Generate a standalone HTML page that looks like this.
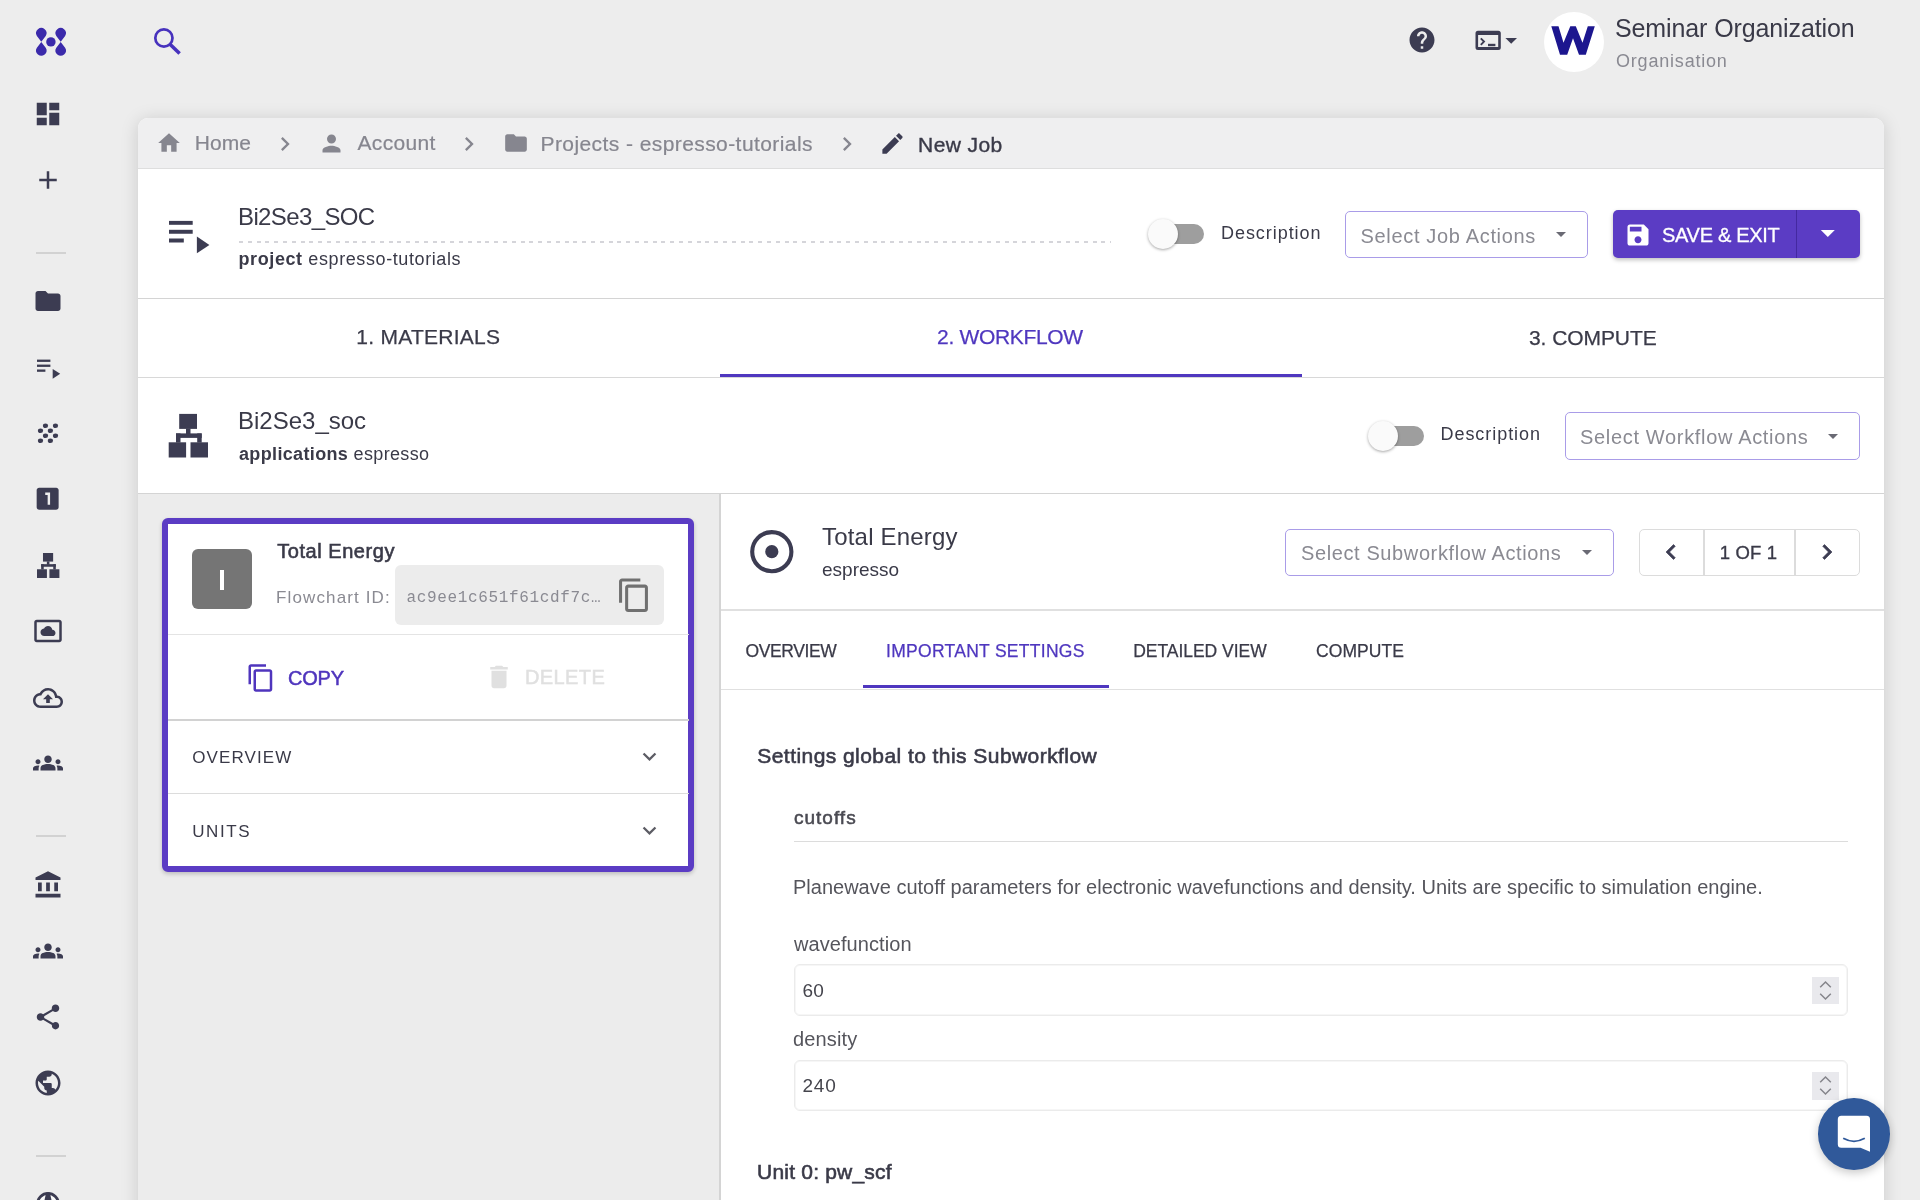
<!DOCTYPE html>
<html><head><meta charset="utf-8">
<style>
*{box-sizing:border-box;margin:0;padding:0}
html,body{width:1920px;height:1200px;overflow:hidden;background:#ededed;font-family:"Liberation Sans",sans-serif;color:#3a3a48}
.a{position:absolute}
.ic{position:absolute;fill:#3c3c52}
.t{position:absolute;white-space:nowrap;line-height:1}
.line{position:absolute;background:#e0e0e0}
</style></head><body>
<div id="root" class="a" style="left:0;top:0;width:1920px;height:1200px;will-change:transform">

<!-- ===== SIDEBAR ===== -->
<svg class="a" style="left:0;top:0;fill:#3b2aab" width="80" height="70" viewBox="0 0 80 70"><path d="M41.3 41.7 L36.90 35.90 A5.2 5.2 0 1 1 45.70 35.90 Z"/><path d="M60.7 41.7 L56.30 35.90 A5.2 5.2 0 1 1 65.10 35.90 Z"/><path d="M41.3 41.9 L36.90 47.70 A5.2 5.2 0 1 0 45.70 47.70 Z"/><path d="M60.7 41.9 L56.30 47.70 A5.2 5.2 0 1 0 65.10 47.70 Z"/><circle cx="50.9" cy="41.9" r="4.7"/></svg>
<!-- dashboard -->
<svg class="ic" style="left:33px;top:99px" width="30" height="30" viewBox="0 0 24 24"><path d="M3 13h8V3H3v10zm0 8h8v-6H3v6zm10 0h8V11h-8v10zm0-18v6h8V3h-8z"/></svg>
<!-- add -->
<svg class="ic" style="left:33px;top:165px" width="30" height="30" viewBox="0 0 24 24"><path d="M19 13h-6v6h-2v-6H5v-2h6V5h2v6h6v2z"/></svg>
<div class="a" style="left:36px;top:252px;width:30px;height:1.5px;background:#d2d2d2"></div>
<!-- folder -->
<svg class="ic" style="left:33px;top:286px" width="30" height="30" viewBox="0 0 24 24"><path d="M10 4H4c-1.1 0-1.99.9-1.99 2L2 18c0 1.1.9 2 2 2h16c1.1 0 2-.9 2-2V8c0-1.1-.9-2-2-2h-8l-2-2z"/></svg>
<!-- playlist play -->
<svg class="ic" style="left:0;top:0" width="80" height="400" viewBox="0 0 80 400">
 <rect x="37" y="359.6" width="13.4" height="2.3"/><rect x="37" y="364.6" width="13.4" height="2.3"/><rect x="37" y="369.5" width="8.4" height="2.3"/>
 <path d="M52.7 369L60.2 373.85L52.7 378.7z"/>
</svg>
<!-- grain -->
<svg class="ic" style="left:0;top:400px" width="80" height="60" viewBox="0 400 80 60">
 <ellipse cx="45.5" cy="425.8" rx="2.6" ry="2.3"/><ellipse cx="55.5" cy="425.8" rx="2.6" ry="2.3"/>
 <ellipse cx="40.5" cy="430.7" rx="2.6" ry="2.3"/><ellipse cx="50.4" cy="430.7" rx="2.6" ry="2.3"/>
 <ellipse cx="45.5" cy="435.7" rx="2.6" ry="2.3"/><ellipse cx="55.5" cy="435.7" rx="2.6" ry="2.3"/>
 <ellipse cx="40.5" cy="440.75" rx="2.6" ry="2.3"/><ellipse cx="50.4" cy="440.75" rx="2.6" ry="2.3"/>
</svg>
<!-- looks one -->
<svg class="ic" style="left:33.3px;top:484px" width="29.3" height="29.3" viewBox="0 0 24 24"><path d="M19 3H5c-1.1 0-2 .9-2 2v14c0 1.1.9 2 2 2h14c1.1 0 2-.9 2-2V5c0-1.1-.9-2-2-2zm-5 14h-2V9h-2V7h4v10z"/></svg>
<!-- sitemap -->
<svg class="ic" style="left:0;top:540px" width="80" height="50" viewBox="0 540 80 50">
 <g transform="translate(37 553) scale(0.57 0.573) translate(-168.7 -413.9)">
 <rect x="179.2" y="413.9" width="17.8" height="15"/><rect x="168.7" y="442.3" width="17.4" height="15.2"/><rect x="190.5" y="442.3" width="17.5" height="15.2"/>
 <rect x="186" y="428.5" width="4.5" height="6"/><rect x="176" y="433.4" width="25.7" height="4.5"/><rect x="176" y="433.4" width="4.5" height="9.2"/><rect x="197.2" y="433.4" width="4.5" height="9.2"/>
 </g>
</svg>
<!-- daydream -->
<svg class="ic" style="left:33px;top:616px" width="30" height="30" viewBox="0 0 24 24"><path d="M9 16h6.5c1.38 0 2.5-1.12 2.5-2.5S16.88 11 15.5 11h-.05c-.24-1.69-1.69-3-3.45-3-1.4 0-2.6.83-3.16 2.02h-.16C7.170 10.18 6 11.45 6 13c0 1.66 1.34 3 3 3zM21 3H3c-1.1 0-2 .9-2 2v14c0 1.1.9 2 2 2h18c1.1 0 2-.9 2-2V5c0-1.1-.9-2-2-2zm0 16.01H3V4.99h18v14.02z"/></svg>
<!-- cloud upload -->
<svg class="ic" style="left:33px;top:683px" width="30" height="30" viewBox="0 0 24 24"><path d="M19.35 10.04C18.67 6.59 15.64 4 12 4 9.11 4 6.6 5.64 5.35 8.04 2.34 8.36 0 10.91 0 14c0 3.31 2.69 6 6 6h13c2.76 0 5-2.240 5-5 0-2.64-2.05-4.78-4.65-4.96zM19 18H6c-2.21 0-4-1.79-4-4 0-2.05 1.53-3.76 3.56-3.97l1.07-.11.5-.95C8.08 7.14 9.94 6 12 6c2.62 0 4.88 1.86 5.39 4.43l.3 1.5 1.53.11c1.56.1 2.78 1.41 2.78 2.96 0 1.65-1.35 3-3 3zM8 13h2.55v3h2.9v-3H16l-4-4z"/></svg>
<!-- groups -->
<svg class="ic" style="left:33px;top:748px" width="30" height="30" viewBox="0 0 24 24"><path d="M12 12.75c1.63 0 3.07.39 4.24.9 1.080.48 1.76 1.56 1.76 2.73V18H6v-1.61c0-1.18.68-2.26 1.76-2.73 1.17-.52 2.61-.91 4.24-.91zM4 13c1.1 0 2-.9 2-2s-.9-2-2-2-2 .9-2 2 .9 2 2 2zm1.13 1.1c-.37-.06-.74-.1-1.13-.1-.99 0-1.93.21-2.78.58C.48 14.9 0 15.62 0 16.43V18h4.5v-1.61c0-.83.23-1.61.63-2.29zM20 13c1.1 0 2-.9 2-2s-.9-2-2-2-2 .9-2 2 .9 2 2 2zm4 3.43c0-.81-.48-1.53-1.22-1.85-.85-.37-1.79-.58-2.78-.58-.39 0-.76.04-1.13.1.4.68.63 1.46.63 2.29V18H24v-1.57zM12 6c1.66 0 3 1.34 3 3s-1.34 3-3 3-3-1.34-3-3 1.34-3 3-3z"/></svg>
<div class="a" style="left:36px;top:835px;width:30px;height:1.5px;background:#d2d2d2"></div>
<!-- bank -->
<svg class="ic" style="left:33px;top:870px" width="30" height="30" viewBox="0 0 24 24"><path d="M4 10h3v7H4zM10.5 10h3v7h-3zM2 19h20v3H2zM17 10h3v7h-3zM12 1L2 6v2h20V6z"/></svg>
<!-- groups 2 -->
<svg class="ic" style="left:33px;top:936px" width="30" height="30" viewBox="0 0 24 24"><path d="M12 12.75c1.63 0 3.07.39 4.24.9 1.080.48 1.76 1.56 1.76 2.73V18H6v-1.61c0-1.18.68-2.26 1.76-2.73 1.17-.52 2.61-.91 4.24-.91zM4 13c1.1 0 2-.9 2-2s-.9-2-2-2-2 .9-2 2 .9 2 2 2zm1.13 1.1c-.37-.06-.74-.1-1.13-.1-.99 0-1.93.21-2.78.58C.48 14.9 0 15.62 0 16.43V18h4.5v-1.61c0-.83.23-1.61.63-2.29zM20 13c1.1 0 2-.9 2-2s-.9-2-2-2-2 .9-2 2 .9 2 2 2zm4 3.43c0-.81-.48-1.53-1.22-1.850-.85-.37-1.79-.58-2.78-.58-.39 0-.76.04-1.13.1.4.68.63 1.46.63 2.29V18H24v-1.57zM12 6c1.66 0 3 1.34 3 3s-1.34 3-3 3-3-1.34-3-3 1.34-3 3-3z"/></svg>
<!-- share -->
<svg class="ic" style="left:33px;top:1002px" width="30" height="30" viewBox="0 0 24 24"><path d="M18 16.08c-.76 0-1.44.3-1.96.77L8.91 12.7c.05-.23.09-.46.09-.7s-.04-.47-.09-.7l7.05-4.11c.54.5 1.25.81 2.04.81 1.66 0 3-1.34 3-3s-1.34-3-3-3-3 1.34-3 3c0 .24.04.47.09.7L8.04 9.81C7.5 9.31 6.79 9 6 9c-1.66 0-3 1.34-3 3s1.34 3 3 3c.79 0 1.5-.31 2.04-.81l7.12 4.16c-.05.21-.08.43-.08.65 0 1.61 1.31 2.92 2.92 2.92 1.61 0 2.92-1.31 2.92-2.92s-1.310-2.92-2.92-2.92z"/></svg>
<!-- globe -->
<svg class="ic" style="left:33px;top:1068px" width="30" height="30" viewBox="0 0 24 24"><path d="M12 2C6.48 2 2 6.48 2 12s4.48 10 10 10 10-4.48 10-10S17.52 2 12 2zm-1 17.93c-3.95-.49-7-3.85-7-7.93 0-.62.08-1.21.21-1.79L9 15v1c0 1.1.9 2 2 2v1.93zm6.9-2.54c-.26-.81-1-1.39-1.9-1.39h-1v-3c0-.55-.45-1-1-1H8v-2h2c.55 0 1-.45 1-1V7h2c1.1 0 2-.9 2-2v-.41c2.93 1.19 5 4.06 5 7.41 0 2.08-.8 3.97-2.1 5.39z"/></svg>
<div class="a" style="left:36px;top:1155px;width:30px;height:1.5px;background:#d2d2d2"></div>
<svg class="a" style="left:20px;top:1180px" width="60" height="20" viewBox="20 1180 60 20"><circle cx="48" cy="1203.8" r="10.4" fill="#fafafa" stroke="#3c3c52" stroke-width="2.8"/><path d="M46.2 1192.5h3.6l1.8 8h-7.2z" fill="#3c3c52"/></svg>

<!-- ===== TOP BAR ===== -->
<svg class="a" style="left:150px;top:26px" width="34" height="32" viewBox="0 0 34 32">
 <circle cx="13.9" cy="12" r="8.6" fill="none" stroke="#4732bd" stroke-width="2.7"/>
 <line x1="20" y1="18.3" x2="29.6" y2="27.5" stroke="#4732bd" stroke-width="3.6"/>
</svg>
<svg class="ic" style="left:1406.8px;top:25.4px" width="30" height="30" viewBox="0 0 24 24"><path d="M12 2C6.48 2 2 6.48 2 12s4.48 10 10 10 10-4.48 10-10S17.52 2 12 2zm1 17h-2v-2h2v2zm2.07-7.75l-.9.92C13.45 12.9 13 13.5 13 15h-2v-.5c0-1.1.45-2.1 1.17-2.83l1.24-1.26c.37-.36.59-.86.59-1.41 0-1.1-.9-2-2-2s-2 .9-2 2H8c0-2.21 1.79-4 4-4s4 1.79 4 4c0 .88-.36 1.68-.93 2.25z"/></svg>
<svg class="a" style="left:1460px;top:20px;fill:#3c3c52" width="70" height="40" viewBox="1460 20 70 40">
 <path fill-rule="evenodd" d="M1478 30.8h20.3a2.5 2.5 0 0 1 2.5 2.5v14.2a2.5 2.5 0 0 1-2.5 2.5h-20.3a2.5 2.5 0 0 1-2.5-2.5v-14.2a2.5 2.5 0 0 1 2.5-2.5zM1478.1 35.1v11.9h20.1v-11.9z"/>
 <path d="M1480.8 38.3l3.2 3.3-3.2 3.3" fill="none" stroke="#3c3c52" stroke-width="1.9"/>
 <rect x="1488" y="43.8" width="7.4" height="2.4"/>
 <path d="M1505.4 37.9h11.6l-5.8 5.9z"/>
</svg>
<div class="a" style="left:1544px;top:12px;width:60px;height:60px;border-radius:50%;background:#fff"></div>
<svg class="a" style="left:1540px;top:15px" width="65" height="50" viewBox="1540 15 65 50"><path d="M1551.3 26.2L1558.5 26.2L1563.5 42.7L1570.3 26.2L1575.8 26.2L1582.5 42.7L1587.8 26.2L1594.8 26.2L1585.8 54.7L1579 54.7L1573 38.2L1567.2 54.7L1560 54.7Z" fill="#1c168f"/></svg>
<div class="t" style="left:1615.0px;top:16.0px;font-size:25px;color:#3a3a48;letter-spacing:-0.11px">Seminar Organization</div>
<div class="t" style="left:1616.0px;top:52.0px;font-size:18px;color:#8a8a92;letter-spacing:0.80px">Organisation</div>

<!-- ===== CARD ===== -->
<div class="a" style="left:138px;top:118px;width:1746px;height:1100px;background:#fff;border-radius:10px 10px 0 0;box-shadow:0 2px 18px rgba(0,0,0,0.15)"></div>
<div class="a" style="left:138px;top:118px;width:1746px;height:51px;background:#efeff0;border-radius:10px 10px 0 0;border-bottom:1.5px solid #dedede"></div>

<!-- breadcrumb -->
<svg class="a" style="left:156px;top:130px;fill:#86868f" width="26" height="26" viewBox="0 0 24 24"><path d="M10 20v-6h4v6h5v-8h3L12 3 2 12h3v8z"/></svg>
<div class="t" style="left:194.8px;top:132.2px;font-size:21px;color:#86868f;letter-spacing:0.00px;-webkit-text-stroke:0.2px #86868f">Home</div>
<svg class="a" style="left:270.6px;top:129.5px;fill:#86868f" width="28" height="28" viewBox="0 0 24 24"><path d="M10 6L8.59 7.41 13.17 12l-4.58 4.59L10 18l6-6z"/></svg>
<svg class="a" style="left:318px;top:129.5px;fill:#86868f" width="27" height="27" viewBox="0 0 24 24"><path d="M12 12c2.21 0 4-1.79 4-4s-1.79-4-4-4-4 1.79-4 4 1.79 4 4 4zm0 2c-2.67 0-8 1.34-8 4v2h16v-2c0-2.66-5.33-4-8-4z"/></svg>
<div class="t" style="left:357.5px;top:132.2px;font-size:21px;color:#86868f;letter-spacing:0.33px;-webkit-text-stroke:0.2px #86868f">Account</div>
<svg class="a" style="left:455.2px;top:129.5px;fill:#86868f" width="28" height="28" viewBox="0 0 24 24"><path d="M10 6L8.59 7.41 13.17 12l-4.58 4.59L10 18l6-6z"/></svg>
<svg class="a" style="left:503px;top:130px;fill:#86868f" width="26" height="26" viewBox="0 0 24 24"><path d="M10 4H4c-1.1 0-1.99.9-1.99 2L2 18c0 1.1.9 2 2 2h16c1.1 0 2-.9 2-2V8c0-1.1-.9-2-2-2h-8l-2-2z"/></svg>
<div class="t" style="left:540.5px;top:133.2px;font-size:21px;color:#86868f;letter-spacing:0.42px;-webkit-text-stroke:0.2px #86868f">Projects - espresso-tutorials</div>
<svg class="a" style="left:832.5px;top:129.5px;fill:#86868f" width="28" height="28" viewBox="0 0 24 24"><path d="M10 6L8.59 7.41 13.17 12l-4.58 4.59L10 18l6-6z"/></svg>
<svg class="a" style="left:879px;top:130px;fill:#3c3c52" width="27" height="27" viewBox="0 0 24 24"><path d="M3 17.25V21h3.75L17.81 9.94l-3.75-3.75L3 17.25zM20.71 7.04c.39-.39.39-1.020 0-1.41l-2.34-2.34c-.39-.39-1.02-.39-1.41 0l-1.83 1.83 3.75 3.75 1.83-1.83z"/></svg>
<div class="t" style="left:918.1px;top:134.0px;font-size:21px;color:#3a3a48;letter-spacing:0.40px;-webkit-text-stroke:0.4px #3a3a48">New Job</div>

<!-- job header -->
<svg class="a" style="left:0;top:0;fill:#3c3c52" width="220" height="260" viewBox="0 0 220 260">
 <rect x="169" y="220.9" width="23.7" height="3.9"/><rect x="169" y="229.8" width="23.7" height="3.95"/><rect x="169" y="238.5" width="14.8" height="4"/>
 <path d="M196.9 236.5L209.4 244.9L196.9 253.3z"/>
</svg>
<div class="t" style="left:238.0px;top:205.0px;font-size:24px;color:#3a3a48;letter-spacing:-0.62px">Bi2Se3_SOC</div>
<div class="a" style="left:239px;top:241.3px;width:872px;height:1.3px;background:repeating-linear-gradient(90deg,#d5d5da 0 4px,transparent 4px 8.8px)"></div>
<div class="t" style="left:238.5px;top:250.0px;font-size:18px;color:#3a3a48;letter-spacing:0.60px"><b>project</b> espresso-tutorials</div>

<div class="a" style="left:1153px;top:223.5px;width:51px;height:20px;border-radius:10px;background:#9e9e9e"></div>
<div class="a" style="left:1147.5px;top:219px;width:30px;height:30px;border-radius:50%;background:#fafafa;box-shadow:0 1px 3px rgba(0,0,0,0.35)"></div>
<div class="t" style="left:1221.0px;top:224.0px;font-size:18px;color:#3a3a48;letter-spacing:0.95px">Description</div>

<div class="a" style="left:1345px;top:210.5px;width:243px;height:47px;border:1.5px solid #a99ce8;border-radius:5px"></div>
<div class="t" style="left:1360.5px;top:226.0px;font-size:20px;color:#8a8a92;letter-spacing:0.67px">Select Job Actions</div>
<svg class="a" style="left:1549px;top:222px;fill:#6a6a74" width="24" height="24" viewBox="0 0 24 24"><path d="M7 10l5 5 5-5z"/></svg>

<div class="a" style="left:1612.5px;top:210px;width:247px;height:47.5px;background:#5b3cc4;border-radius:5px;box-shadow:0 2px 4px rgba(0,0,0,0.25)"></div>
<div class="a" style="left:1796px;top:210px;width:1.2px;height:47.5px;background:#4429a0"></div>
<svg class="a" style="left:1623.5px;top:220.5px;fill:#fff" width="28" height="28" viewBox="0 0 24 24"><path d="M17 3H5c-1.11 0-2 .9-2 2v14c0 1.1.89 2 2 2h14c1.1 0 2-.9 2-2V7l-4-4zm-5 16c-1.66 0-3-1.34-3-3s1.34-3 3-3 3 1.34 3 3-1.34 3-3 3zm3-10H5V5h10v4z"/></svg>
<div class="t" style="left:1662.0px;top:225.0px;font-size:20px;color:#fff;letter-spacing:-0.30px;-webkit-text-stroke:0.3px #fff">SAVE &amp; EXIT</div>
<svg class="a" style="left:1811.2px;top:216px;fill:#fff" width="33.6" height="33.6" viewBox="0 0 24 24"><path d="M7 10l5 5 5-5z"/></svg>

<div class="line" style="left:138px;top:297.8px;width:1746px;height:1.4px;background:#d4d4d4"></div>

<!-- steps tabs -->
<div class="t" style="left:356.2px;top:326.0px;font-size:21px;color:#3a3a48;letter-spacing:0.28px;-webkit-text-stroke:0.25px #3a3a48">1. MATERIALS</div>
<div class="t" style="left:937.1px;top:326.0px;font-size:21px;color:#4f37bf;letter-spacing:-0.34px;-webkit-text-stroke:0.25px #4f37bf">2. WORKFLOW</div>
<div class="t" style="left:1529.0px;top:326.8px;font-size:21px;color:#3a3a48;letter-spacing:-0.07px;-webkit-text-stroke:0.25px #3a3a48">3. COMPUTE</div>
<div class="line" style="left:138px;top:377px;width:1746px;height:1.4px;background:#d8d8d8"></div>
<div class="a" style="left:720px;top:373.5px;width:582px;height:3.5px;background:#4f37bf"></div>

<!-- workflow header -->
<svg class="a" style="left:0;top:380px;fill:#3c3c52" width="220" height="100" viewBox="0 380 220 100">
 <rect x="179.2" y="413.9" width="17.8" height="15"/><rect x="168.7" y="442.3" width="17.4" height="15.2"/><rect x="190.5" y="442.3" width="17.5" height="15.2"/>
 <rect x="186" y="428.5" width="4.5" height="6"/><rect x="176" y="433.4" width="25.7" height="4.5"/><rect x="176" y="433.4" width="4.5" height="9.2"/><rect x="197.2" y="433.4" width="4.5" height="9.2"/>
</svg>
<div class="t" style="left:238.0px;top:409.0px;font-size:24px;color:#3a3a48;letter-spacing:-0.00px">Bi2Se3_soc</div>
<div class="t" style="left:239.0px;top:444.5px;font-size:18px;color:#3a3a48;letter-spacing:0.35px"><b>applications</b> espresso</div>

<div class="a" style="left:1373px;top:425.5px;width:51px;height:20px;border-radius:10px;background:#9e9e9e"></div>
<div class="a" style="left:1368px;top:421px;width:30px;height:30px;border-radius:50%;background:#fafafa;box-shadow:0 1px 3px rgba(0,0,0,0.35)"></div>
<div class="t" style="left:1440.5px;top:424.5px;font-size:18px;color:#3a3a48;letter-spacing:0.95px">Description</div>
<div class="a" style="left:1565px;top:412px;width:295px;height:47.5px;border:1.5px solid #a99ce8;border-radius:5px"></div>
<div class="t" style="left:1580.0px;top:427.0px;font-size:20px;color:#8a8a92;letter-spacing:0.67px">Select Workflow Actions</div>
<svg class="a" style="left:1821px;top:424px;fill:#6a6a74" width="24" height="24" viewBox="0 0 24 24"><path d="M7 10l5 5 5-5z"/></svg>
<div class="line" style="left:138px;top:492.8px;width:1746px;height:1.4px;background:#d4d4d4"></div>

<!-- left panel -->
<div class="a" style="left:138px;top:494.2px;width:583px;height:720px;background:#ececec;border-right:2px solid #d4d4d4"></div>

<!-- unit card -->
<div class="a" style="left:162px;top:518px;width:532px;height:354px;background:#fff;border:6px solid #5b3cc4;border-radius:6px;box-shadow:0 2px 4px rgba(0,0,0,0.2)"></div>
<div class="a" style="left:192px;top:549px;width:60px;height:60px;border-radius:6px;background:#757575"></div><div class="a" style="left:220.1px;top:570px;width:3.6px;height:19.7px;background:#fff"></div>
<div class="t" style="left:277.2px;top:541.0px;font-size:20px;color:#3a3a48;-webkit-text-stroke:0.6px #3a3a48;letter-spacing:0.55px">Total Energy</div>
<div class="t" style="left:276.0px;top:588.5px;font-size:17px;color:#8a8a92;letter-spacing:1.13px">Flowchart ID:</div>
<div class="a" style="left:395px;top:565px;width:269px;height:60px;background:#ececec;border-radius:6px"></div>
<div class="t" style="left:406.6px;top:590.0px;font-size:16px;color:#8a8a92;letter-spacing:0.64px;font-family:'Liberation Mono',monospace">ac9ee1c651f61cdf7c…</div>
<svg class="a" style="left:616px;top:576.8px;fill:#707070" width="36.5" height="36.5" viewBox="0 0 24 24"><path d="M16 1H4c-1.1 0-2 .9-2 2v14h2V3h12V1zm3 4H8c-1.1 0-2 .9-2 2v14c0 1.1.9 2 2 2h11c1.1 0 2-.9 2-2V7c0-1.1-.9-2-2-2zm0 16H8V7h11v14z"/></svg>
<div class="line" style="left:167.5px;top:633.5px;width:521px;height:1.5px;background:#e4e4e4"></div>
<svg class="a" style="left:246.3px;top:662.5px;fill:#4f35bd" width="30" height="30" viewBox="0 0 24 24"><path d="M16 1H4c-1.1 0-2 .9-2 2v14h2V3h12V1zm3 4H8c-1.1 0-2 .9-2 2v14c0 1.1.9 2 2 2h11c1.1 0 2-.9 2-2V7c0-1.1-.9-2-2-2zm0 16H8V7h11v14z"/></svg>
<div class="t" style="left:287.9px;top:668.0px;font-size:20px;color:#4f35bd;letter-spacing:-0.16px;-webkit-text-stroke:0.5px #4f35bd">COPY</div>
<svg class="a" style="left:483.8px;top:661.6px;fill:#e0e0e0" width="30" height="30" viewBox="0 0 24 24"><path d="M6 19c0 1.1.9 2 2 2h8c1.1 0 2-.9 2-2V7H6v12zM19 4h-3.5l-1-1h-5l-1 1H5v2h14V4z"/></svg>
<div class="t" style="left:525.0px;top:667.0px;font-size:20px;color:#e0e0e0;letter-spacing:0.40px;-webkit-text-stroke:0.5px #e0e0e0">DELETE</div>
<div class="line" style="left:167.5px;top:719px;width:521px;height:2px;background:#d2d2d2"></div>
<div class="t" style="left:192.2px;top:749.0px;font-size:17px;color:#3a3a48;letter-spacing:1.12px">OVERVIEW</div>
<svg class="a" style="left:636.2px;top:742.8px;fill:#5c5c64" width="27" height="27" viewBox="0 0 24 24"><path d="M16.59 8.59L12 13.17 7.41 8.59 6 10l6 6 6-6z"/></svg>
<div class="line" style="left:167.5px;top:792.5px;width:521px;height:1.5px;background:#dcdcdc"></div>
<div class="t" style="left:192.2px;top:822.9px;font-size:17px;color:#3a3a48;letter-spacing:1.61px">UNITS</div>
<svg class="a" style="left:636.2px;top:816.5px;fill:#5c5c64" width="27" height="27" viewBox="0 0 24 24"><path d="M16.59 8.59L12 13.17 7.41 8.59 6 10l6 6 6-6z"/></svg>

<!-- right panel header -->
<svg class="a" style="left:745px;top:525px" width="53" height="53" viewBox="0 0 53 53"><circle cx="26.8" cy="26.7" r="19.6" fill="none" stroke="#3c3c52" stroke-width="4.1"/><circle cx="26.8" cy="26.7" r="6.6" fill="#3c3c52"/></svg>
<div class="t" style="left:822.0px;top:525.0px;font-size:24px;color:#3a3a48;letter-spacing:0.20px">Total Energy</div>
<div class="t" style="left:822.0px;top:560.0px;font-size:19px;color:#3a3a48;letter-spacing:0.00px">espresso</div>
<div class="a" style="left:1285px;top:528.5px;width:328.5px;height:47px;border:1.5px solid #a99ce8;border-radius:5px"></div>
<div class="t" style="left:1301.0px;top:543.0px;font-size:20px;color:#8a8a92;letter-spacing:0.61px">Select Subworkflow Actions</div>
<svg class="a" style="left:1575px;top:540px;fill:#6a6a74" width="24" height="24" viewBox="0 0 24 24"><path d="M7 10l5 5 5-5z"/></svg>
<div class="a" style="left:1638.5px;top:528.5px;width:221px;height:47px;border:1.5px solid #dcdcdc;border-radius:5px"></div>
<div class="a" style="left:1703px;top:528.5px;width:1.5px;height:47px;background:#dcdcdc"></div>
<div class="a" style="left:1794px;top:528.5px;width:1.5px;height:47px;background:#dcdcdc"></div>
<svg class="a" style="left:1656px;top:537px;fill:#3c3c52" width="30" height="30" viewBox="0 0 24 24"><path d="M15.41 7.41L14 6l-6 6 6 6 1.41-1.41L10.83 12z" stroke="#3c3c52" stroke-width="0.5"/></svg>
<div class="t" style="left:1719.8px;top:544.0px;font-size:18.5px;color:#3a3a48;letter-spacing:0.16px;-webkit-text-stroke:0.35px #3a3a48">1 OF 1</div>
<svg class="a" style="left:1812px;top:537px;fill:#3c3c52" width="30" height="30" viewBox="0 0 24 24"><path d="M10 6L8.59 7.41 13.17 12l-4.58 4.59L10 18l6-6z" stroke="#3c3c52" stroke-width="0.5"/></svg>
<div class="line" style="left:721px;top:609px;width:1163px;height:1.5px"></div>

<!-- sub tabs -->
<div class="t" style="left:745.6px;top:642.8px;font-size:17.5px;color:#3a3a48;letter-spacing:-0.42px;-webkit-text-stroke:0.25px #3a3a48">OVERVIEW</div>
<div class="t" style="left:886.0px;top:642.8px;font-size:17.5px;color:#4f37bf;letter-spacing:0.29px;-webkit-text-stroke:0.25px #4f37bf">IMPORTANT SETTINGS</div>
<div class="t" style="left:1133.2px;top:642.8px;font-size:17.5px;color:#3a3a48;letter-spacing:-0.03px;-webkit-text-stroke:0.25px #3a3a48">DETAILED VIEW</div>
<div class="t" style="left:1316.0px;top:642.8px;font-size:17.5px;color:#3a3a48;letter-spacing:0.08px;-webkit-text-stroke:0.25px #3a3a48">COMPUTE</div>
<div class="line" style="left:721px;top:688.5px;width:1163px;height:1.5px"></div>
<div class="a" style="left:862.5px;top:684.5px;width:246.5px;height:3.5px;background:#4f37bf"></div>

<!-- settings -->
<div class="t" style="left:757.3px;top:745.3px;font-size:21px;color:#3a3a48;-webkit-text-stroke:0.6px #3a3a48;letter-spacing:0.44px">Settings global to this Subworkflow</div>
<div class="t" style="left:794.0px;top:808.2px;font-size:19px;color:#4a4a52;letter-spacing:1.00px;-webkit-text-stroke:0.55px #4a4a52">cutoffs</div>
<div class="line" style="left:793.5px;top:841.3px;width:1054px;height:1.2px;background:#dcdcdc"></div>
<div class="t" style="left:793.0px;top:876.5px;font-size:20px;color:#55555c;letter-spacing:0.00px">Planewave cutoff parameters for electronic wavefunctions and density. Units are specific to simulation engine.</div>
<div class="t" style="left:794.0px;top:934.0px;font-size:20px;color:#55555c;letter-spacing:0.07px">wavefunction</div>
<div class="a" style="left:793.5px;top:964px;width:1054px;height:52px;border:1.5px solid #ebebeb;border-radius:6px;box-shadow:inset 0 0 0 1px #f6f6f6"></div>
<div class="t" style="left:802.5px;top:981.0px;font-size:19px;color:#45454d;letter-spacing:0.25px">60</div>
<div class="a" style="left:1812px;top:976.5px;width:27px;height:27.5px;background:#e9e9ed"></div>
<svg class="a" style="left:1812px;top:976.5px" width="27" height="27" viewBox="0 0 27 27"><path d="M8.2 10.3L13.5 5l5.3 5.3M8.2 16.7L13.5 22l5.3-5.3" fill="none" stroke="#85858b" stroke-width="1.5"/></svg>
<div class="t" style="left:793.0px;top:1029.2px;font-size:20px;color:#55555c;letter-spacing:0.16px">density</div>
<div class="a" style="left:793.5px;top:1059.5px;width:1054px;height:51px;border:1.5px solid #ebebeb;border-radius:6px;box-shadow:inset 0 0 0 1px #f6f6f6"></div>
<div class="t" style="left:802.5px;top:1075.8px;font-size:19px;color:#45454d;letter-spacing:0.75px">240</div>
<div class="a" style="left:1812px;top:1072px;width:27px;height:27.5px;background:#e9e9ed"></div>
<svg class="a" style="left:1812px;top:1072px" width="27" height="27" viewBox="0 0 27 27"><path d="M8.2 10.3L13.5 5l5.3 5.3M8.2 16.7L13.5 22l5.3-5.3" fill="none" stroke="#85858b" stroke-width="1.5"/></svg>
<div class="t" style="left:757.1px;top:1161.2px;font-size:21px;color:#3a3a48;-webkit-text-stroke:0.6px #3a3a48;letter-spacing:0.20px">Unit 0: pw_scf</div>

<!-- chat bubble -->
<div class="a" style="left:1818.3px;top:1098px;width:71.5px;height:71.5px;border-radius:50%;background:#30599a;box-shadow:0 3px 10px rgba(0,0,0,0.22)"></div>
<svg class="a" style="left:1830px;top:1108px" width="50" height="50" viewBox="1830 1108 50 50">
 <path d="M1841.3 1115.8h25.2a3.5 3.5 0 0 1 3.5 3.5v32.5l-9.5-4h-19.2a3.5 3.5 0 0 1-3.5-3.5v-25a3.5 3.5 0 0 1 3.5-3.5z" fill="#fff"/>
 <path d="M1843.2 1138.3q10.8 6 21.6 0" fill="none" stroke="#30599a" stroke-width="1.8"/>
</svg>

</div>
</body></html>
